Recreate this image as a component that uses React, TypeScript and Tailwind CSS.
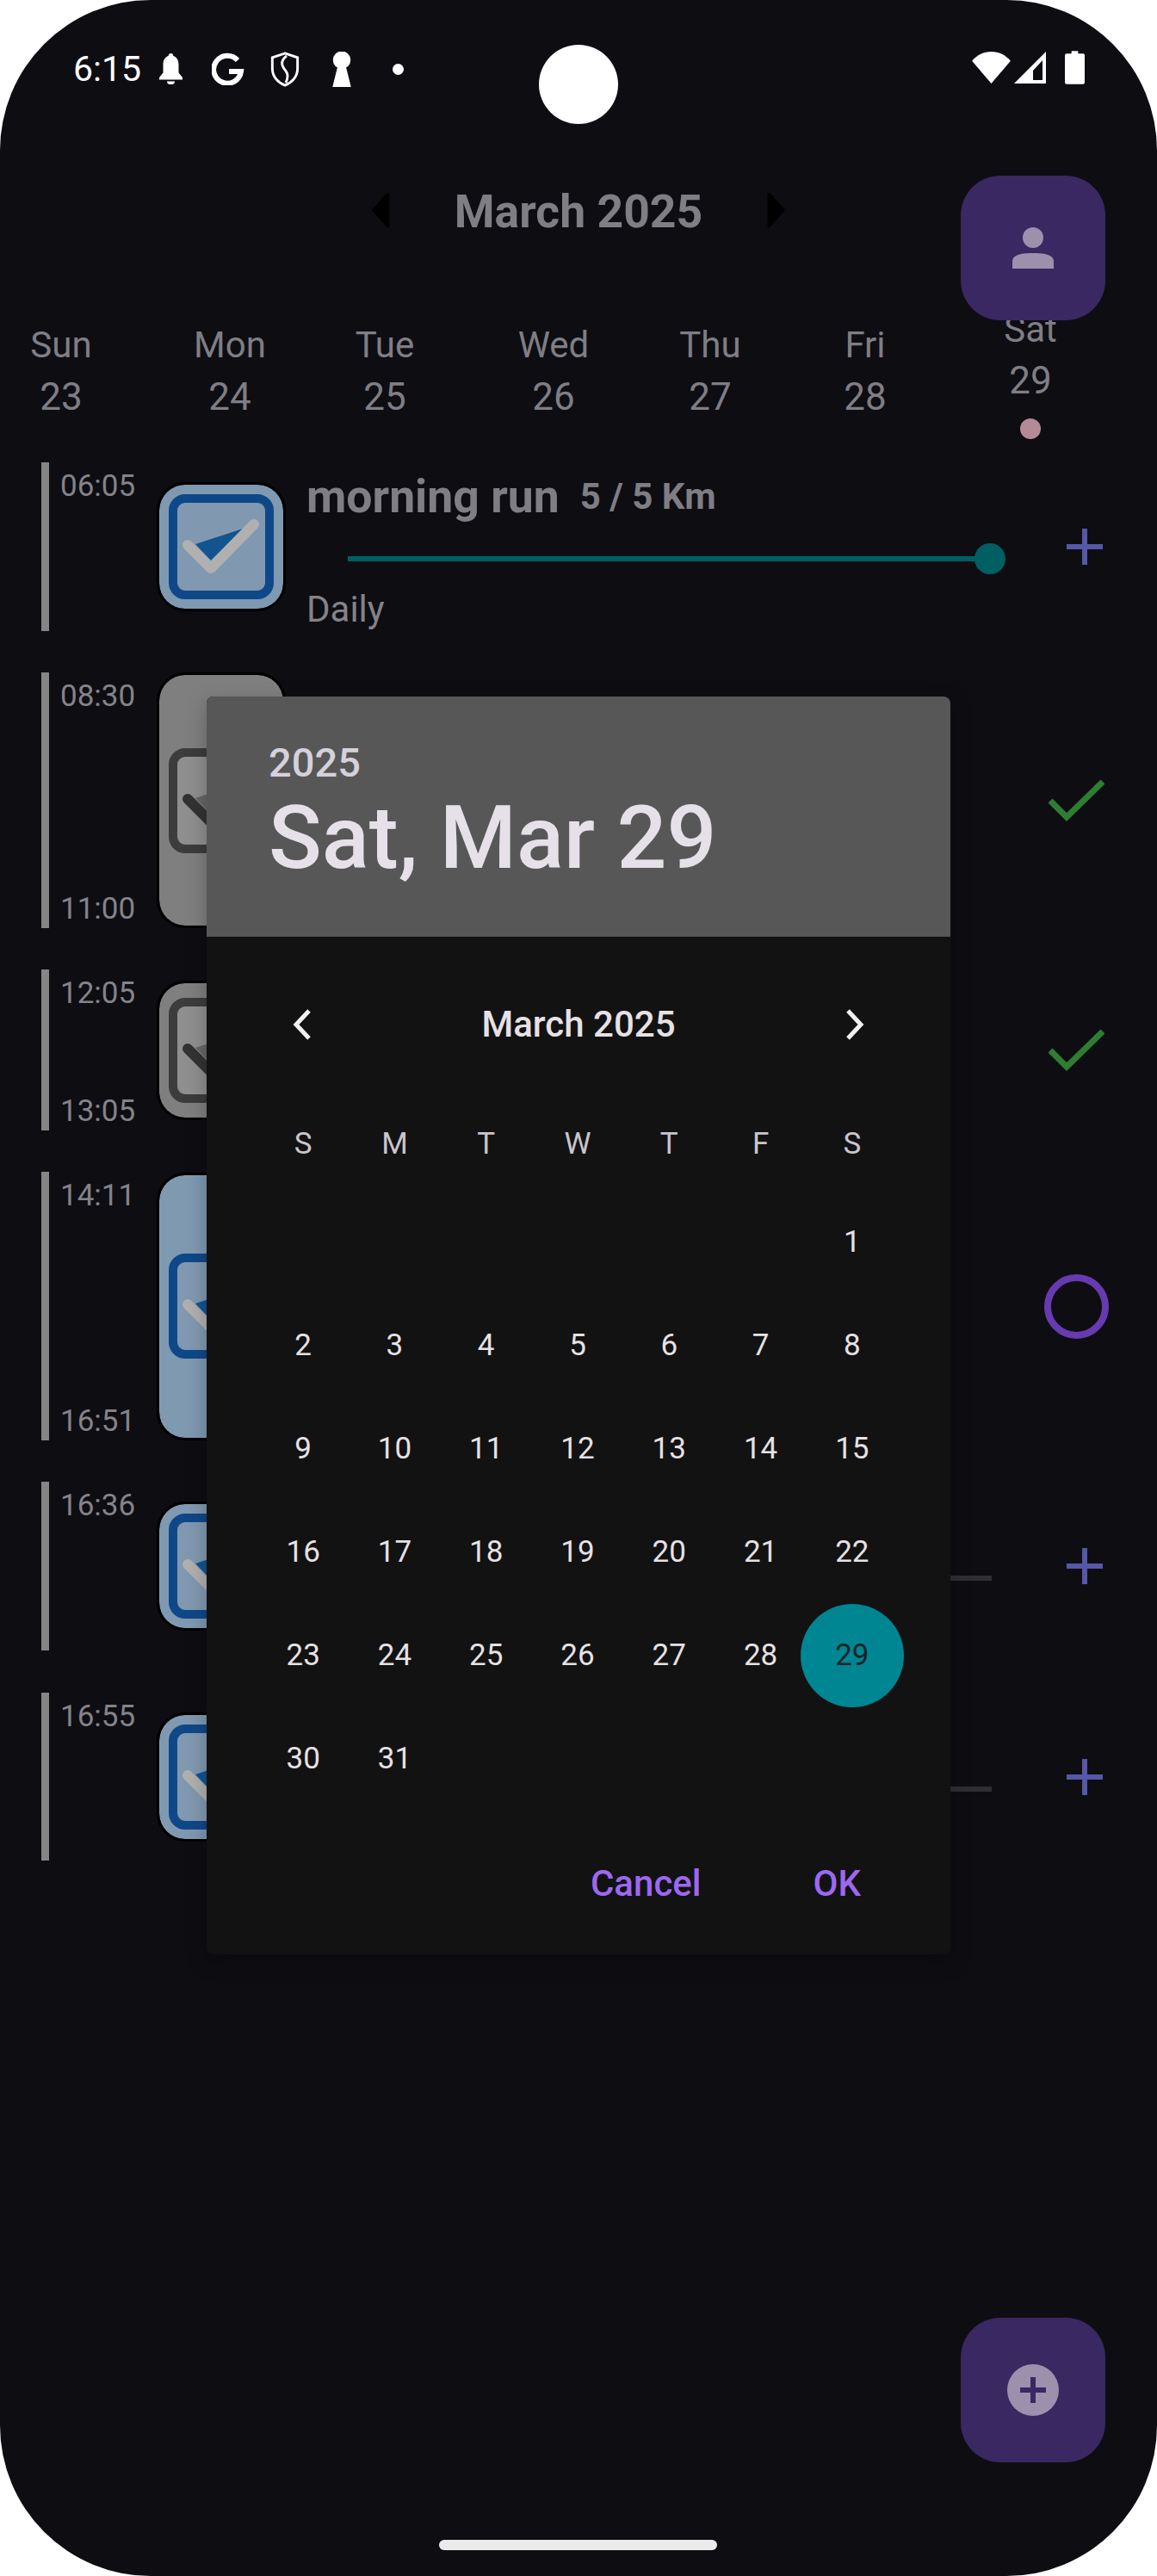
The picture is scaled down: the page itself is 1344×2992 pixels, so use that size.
import React from "react";

const font = "font-['Roboto',sans-serif]";

const days = [
    { name: "Sun", num: "23", w: "w-[142px]" },
    { name: "Mon", num: "24", w: "w-[250px]" },
    { name: "Tue", num: "25", w: "w-[110px]" },
    { name: "Wed", num: "26", w: "w-[282px]" },
    { name: "Thu", num: "27", w: "w-[82px]" },
    { name: "Fri", num: "28", w: "w-[278px]" },
];

const Tick = () => (
    <svg width="65" height="50" viewBox="0 0 65 50" className="mx-auto">
        <path d="M2 25 L21 44 L63 3" fill="none" stroke="#2e7d32" strokeWidth="7" />
    </svg>
);

const Plus = () => (
    <svg width="42" height="42" viewBox="0 0 42 42" className="ml-[26px]">
        <path d="M0 21 H42 M21 0 V42" stroke="#5558a8" strokeWidth="6" />
    </svg>
);

const Ring = () => <div className="h-[75px] w-[75px] rounded-full border-[8px] border-[#673ab0]" />;

const TaskIcon = ({ grey, h }: { grey?: boolean; h: number }) => {
    const box = grey ? "#7f7f7f" : "#7f99b1";
    const inner = grey ? "#8f8f8f" : "#8199b0";
    const edge = grey ? "#3c3c3c" : "#0f4888";
    const tick = grey ? "#333333" : "#b0b0b0";
    const tri = grey ? "#666666" : "#11548f";
    return (
        <div
            className="flex w-[144px] shrink-0 items-center justify-center rounded-[30px] outline-[3px] outline-black"
            style={{ height: h, background: box }}
        >
            <svg width="122" height="122" viewBox="0 0 122 122">
                <rect x="5" y="5" width="112" height="112" rx="14" fill={inner} stroke={edge} strokeWidth="10" />
                <path d="M31 58 L86 40 L49 77 Z" fill={tri} />
                <path d="M22 59 L49 86 L99 35" fill="none" stroke={tick} strokeWidth="12" strokeLinecap="round" strokeLinejoin="round" />
            </svg>
        </div>
    );
};

const TimeBar = ({ start, end }: { start: string; end?: string }) => (
    <div className="flex h-full w-[137px] shrink-0 gap-[13px]">
        <div className="w-[9px] bg-[#858585]" />
        <div className="flex flex-col justify-between pb-[2px] pt-[8px] text-[35px] leading-[40px] text-[#84838a]">
            <span>{start}</span>
            {end && <span>{end}</span>}
        </div>
    </div>
);

const Task = ({
    h,
    gap,
    start,
    end,
    icon,
    grey,
    mark,
    children,
}: {
    h: number;
    gap?: number;
    start: string;
    end?: string;
    icon: number;
    grey?: boolean;
    mark: React.ReactNode;
    children?: React.ReactNode;
}) => (
    <div className="flex items-center" style={{ height: h, marginTop: gap }}>
        <TimeBar start={start} end={end} />
        <TaskIcon grey={grey} h={icon} />
        <div className="h-full w-[884px] shrink-0">{children}</div>
        <div className="w-[75px] shrink-0">{mark}</div>
    </div>
);

const IdleTrack = () => <div className="ml-[75px] mt-[109px] h-[6px] w-[748px] bg-[#2f2e33]" />;

const calendar = [
    ["", "", "", "", "", "", "1"],
    ["2", "3", "4", "5", "6", "7", "8"],
    ["9", "10", "11", "12", "13", "14", "15"],
    ["16", "17", "18", "19", "20", "21", "22"],
    ["23", "24", "25", "26", "27", "28", "29"],
    ["30", "31", "", "", "", "", ""],
];

const DatePicker = () => (
    <div className={`absolute left-[240px] top-[809px] w-[864px] overflow-hidden rounded-lg bg-[#121212] shadow-[0_8px_24px_rgba(0,0,0,0.25)] ${font}`}>
        <div className="h-[279px] bg-[#575757] pl-[72px] pt-[49px]">
            <div className="text-[47px] leading-[56px] font-medium text-[#d5d1db]">2025</div>
            <div className="-mt-[1px] text-[102px] leading-[120px] font-medium text-[#e6e1e9]">Sat, Mar 29</div>
        </div>
        <div className="flex h-[204px] items-center justify-between px-[100px] text-[#e6e1e5]">
            <svg width="22" height="36" viewBox="0 0 22 36">
                <path d="M19 2 L4 18 L19 34" fill="none" stroke="#f0f0f0" strokeWidth="5" />
            </svg>
            <span className="text-[42px] leading-[50px] font-medium">March 2025</span>
            <svg width="22" height="36" viewBox="0 0 22 36">
                <path d="M3 2 L18 18 L3 34" fill="none" stroke="#f0f0f0" strokeWidth="5" />
            </svg>
        </div>
        <div className="ml-[59px] mr-[61px] grid grid-cols-7">
            {["S", "M", "T", "W", "T", "F", "S"].map((d, i) => (
                <div key={i} className="flex h-[74px] items-center justify-center text-[35px] text-[#c9c5cd]">
                    {d}
                </div>
            ))}
        </div>
        <div className="ml-[59px] mr-[61px] mt-[17px] grid grid-cols-7">
            {calendar.flat().map((d, i) => (
                <div key={i} className="flex h-[120px] items-center justify-center text-[35px] text-[#e6e1e5]">
                    {d === "29" ? (
                        <span className="flex h-[120px] w-[120px] shrink-0 items-center justify-center rounded-full bg-[#008593] text-[#1a2428]">
                            {d}
                        </span>
                    ) : (
                        d
                    )}
                </div>
            ))}
        </div>
        <div className="flex h-[167px] items-start justify-end gap-[130px] pr-[104px] pt-[60px] text-[42px] leading-[50px] font-medium text-[#9c68f0]">
            <span>Cancel</span>
            <span>OK</span>
        </div>
    </div>
);

const Fab = ({ children, className }: { children: React.ReactNode; className: string }) => (
    <div className={`absolute flex h-[168px] w-[168px] items-center justify-center rounded-[46px] bg-[#392862] ${className}`}>
        {children}
    </div>
);

const App: React.FC = () => {
    return (
        <div className="h-[2992px] w-[1344px] bg-white">
            <div className={`relative h-[2992px] w-[1344px] overflow-hidden rounded-[175px] bg-[#0e0d12] ${font}`}>
                {/* status bar */}
                <div className="flex h-[206px] items-start justify-between pl-[85px] pr-[84px] pt-[56px]">
                    <div className="flex items-center text-white">
                        <span className="text-[41px] leading-[48px]">6:15</span>
                        <svg className="ml-[19px]" width="31" height="36" viewBox="0 0 32 40" fill="#fff">
                            <path d="M16 0c2 0 3 1 3 3 5 2 7 6 7 12v10l5 6v3H1v-3l5-6V15C6 9 8 5 13 3c0-2 1-3 3-3z" />
                            <path d="M11 36h10c0 3-2 4-5 4s-5-1-5-4z" />
                        </svg>
                        <svg className="ml-[32px]" width="38" height="38" viewBox="0 0 38 38">
                            <path d="M30 9 A16 16 0 1 0 34 22 H20" fill="none" stroke="#fff" strokeWidth="6" />
                        </svg>
                        <svg className="ml-[30px]" width="34" height="41" viewBox="0 0 34 42">
                            <path d="M17 2 L32 7 V20 C32 30 25 37 17 40 C9 37 2 30 2 20 V7 Z" fill="none" stroke="#fff" strokeWidth="3" />
                            <path d="M19 5 C10 12 14 18 18 23 C21 27 21 31 18 37" fill="none" stroke="#fff" strokeWidth="3" />
                        </svg>
                        <svg className="ml-[38px]" width="22" height="41" viewBox="0 0 22 42" fill="#fff">
                            <circle cx="11" cy="10" r="10.5" />
                            <path d="M7 14 H15 L22 42 H0 Z" />
                        </svg>
                        <span className="ml-[48px] h-[13px] w-[13px] rounded-full bg-white" />
                    </div>
                    <div className="flex items-center pt-[3px]">
                        <svg width="45" height="37" viewBox="0 0 46 38" fill="#fff">
                            <path d="M0 11 C6 4 14 0 23 0 C32 0 40 4 46 11 L23 38 Z" />
                        </svg>
                        <svg className="ml-[4px]" width="37" height="37" viewBox="0 0 37 37">
                            <path d="M0 37 L37 0 V37 Z" fill="#fff" />
                            <path d="M22 33 V22 L33 10 V33 Z" fill="#0e0d12" />
                        </svg>
                        <svg className="ml-[22px]" width="23" height="39" viewBox="0 0 24 40" fill="#fff">
                            <path d="M8 0 H16 V3 H22 Q24 3 24 5 V38 Q24 40 22 40 H2 Q0 40 0 38 V5 Q0 3 2 3 H8 Z" />
                        </svg>
                    </div>
                </div>
                <div className="absolute left-[626px] top-[52px] h-[92px] w-[92px] rounded-full bg-white" />

                {/* month header */}
                <div className="flex h-[76px] items-center justify-center">
                    <svg width="24" height="42" viewBox="0 0 24 44" className="mr-[74px]">
                        <path d="M21 3 L4 22 L21 41 Z" fill="#000" stroke="#000" strokeWidth="4" strokeLinejoin="round" />
                    </svg>
                    <span className="pt-[3px] text-[53.5px] leading-[60px] font-bold text-[#7f7e85]">March 2025</span>
                    <svg width="24" height="42" viewBox="0 0 24 44" className="ml-[74px]">
                        <path d="M3 3 L20 22 L3 41 Z" fill="#000" stroke="#000" strokeWidth="4" strokeLinejoin="round" />
                    </svg>
                </div>

                {/* week */}
                <div className="mt-[94px] flex h-[161px] items-start">
                    {days.map((d) => (
                        <div key={d.num} className={`flex flex-col items-center text-[#7f7e85] ${d.w}`}>
                            <span className="text-[42px] leading-[50px]">{d.name}</span>
                            <span className="mt-[10px] text-[44px] leading-[50px]">{d.num}</span>
                        </div>
                    ))}
                    <div className="-mt-[18px] flex w-[106px] flex-col items-center text-[#7f7e85]">
                        <span className="text-[42px] leading-[50px]">Sat</span>
                        <span className="mt-[9px] text-[44px] leading-[50px]">29</span>
                        <span className="mt-[19px] h-[24px] w-[24px] rounded-full bg-[#b58a96]" />
                    </div>
                </div>

                {/* tasks */}
                <div className="flex flex-col pl-[48px]">
                    <Task h={196} start="06:05" icon={144} mark={<Plus />}>
                        <div className="ml-[27px] mt-[9px] flex h-[62px] items-baseline">
                            <span className="text-[53.5px] leading-[62px] font-bold text-[#7f7e85]">morning run</span>
                            <span className="ml-[24px] -translate-y-[4px] text-[42px] leading-[40px] font-bold text-[#7f7e85]">5 / 5 Km</span>
                        </div>
                        <div className="relative ml-[75px] mt-[38px] h-[6px] w-[746px] bg-[#005f63]">
                            <span className="absolute -right-[18px] -top-[15px] h-[36px] w-[36px] rounded-full bg-[#005f63]" />
                        </div>
                        <div className="ml-[27px] mt-[31px] text-[42px] leading-[50px] text-[#84838a]">Daily</div>
                    </Task>
                    <Task h={297} gap={48} start="08:30" end="11:00" icon={291} grey mark={<Tick />} />
                    <Task h={187} gap={48} start="12:05" end="13:05" icon={156} grey mark={<Tick />} />
                    <Task h={312} gap={48} start="14:11" end="16:51" icon={305} mark={<Ring />} />
                    <Task h={196} gap={48} start="16:36" icon={144} mark={<Plus />}>
                        <IdleTrack />
                    </Task>
                    <Task h={195} gap={49} start="16:55" icon={144} mark={<Plus />}>
                        <IdleTrack />
                    </Task>
                </div>

                <DatePicker />

                <Fab className="left-[1116px] top-[204px]">
                    <svg width="48" height="48" viewBox="0 0 48 48" fill="#9c90ad">
                        <ellipse cx="24" cy="12" rx="12" ry="12" />
                        <path d="M0 48 V40 C0 31 12 30 24 30 C36 30 48 31 48 40 V48 Z" />
                    </svg>
                </Fab>
                <Fab className="left-[1116px] top-[2692px]">
                    <svg width="60" height="60" viewBox="0 0 60 60">
                        <circle cx="30" cy="30" r="30" fill="#9c90ad" />
                        <path d="M15 30 H45 M30 15 V45" stroke="#392862" strokeWidth="6" />
                    </svg>
                </Fab>

                {/* gesture pill */}
                <div className="absolute bottom-[30px] left-[510px] h-[12px] w-[323px] rounded-full bg-[#ebebeb]" />
            </div>
        </div>
    );
};

export default App;
